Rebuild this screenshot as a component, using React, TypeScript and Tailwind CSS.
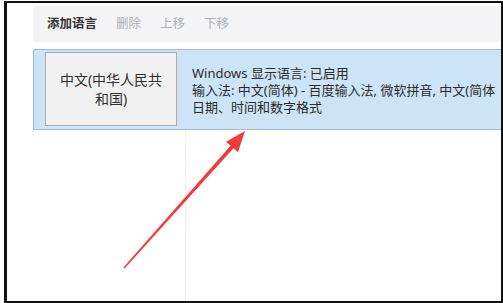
import React from 'react';

const font = { fontFamily: '"Noto Sans", "Noto Sans CJK SC", sans-serif' };

const toolbarItems = [
  { label: '添加语言', active: true },
  { label: '删除', active: false },
  { label: '上移', active: false },
  { label: '下移', active: false },
];

const Arrow = () => (
  <svg className="absolute left-0 top-0 pointer-events-none" width="503" height="303" viewBox="0 0 503 303">
    <polygon
      points="245,131 238,152.3 233.5,148.3 124.6,268.6 123.4,267.4 230.5,145.7 226,141.7"
      fill="#f43b3b"
    />
  </svg>
);

const App = () => {
  return (
    <div className="relative w-[503px] h-[303px] bg-white overflow-hidden" style={font}>
      <div className="ml-[4px] mt-[1px] w-[499px] h-[302px] border-l-[3px] border-t-2 border-r-2 border-b-2 border-[#111] flex flex-col overflow-hidden">
        {/* toolbar */}
        <div className="ml-[26px] mt-[3px] h-[36px] bg-[#f4f4f6] flex items-center pl-[14px] gap-[19px] text-[12.5px] shrink-0">
          {toolbarItems.map((item) => (
            <span
              key={item.label}
              className={item.active ? 'text-[#333] font-semibold' : 'text-[#aeb0b5]'}
            >
              {item.label}
            </span>
          ))}
        </div>

        {/* selected language row */}
        <div className="ml-[26px] mt-[7px] h-[81px] w-[470px] shrink-0 bg-[#cde4f7] border border-r-0 border-[#a3bcd3] flex items-stretch py-[2px] pl-[11px] overflow-hidden">
          <div className="w-[132px] h-[74px] shrink-0 bg-[#f1f1f1] border border-[#acacac] flex flex-col items-center justify-center text-[14px] leading-[19px] text-[#2e2e2e] whitespace-nowrap">
            <span>中文(中华人民共</span>
            <span>和国)</span>
          </div>
          <div className="ml-[15px] pt-[13px] text-[13px] leading-[17px] text-[#2b2b2b] whitespace-nowrap">
            <div>Windows 显示语言: 已启用</div>
            <div>输入法: 中文(简体) - 百度输入法, 微软拼音, 中文(简体</div>
            <div>日期、时间和数字格式</div>
          </div>
        </div>

        {/* empty list area */}
        <div className="flex-1 flex">
          <div className="w-[179px] border-r border-[#efeff1]" />
        </div>
      </div>
      <Arrow />
    </div>
  );
};

export default App;
